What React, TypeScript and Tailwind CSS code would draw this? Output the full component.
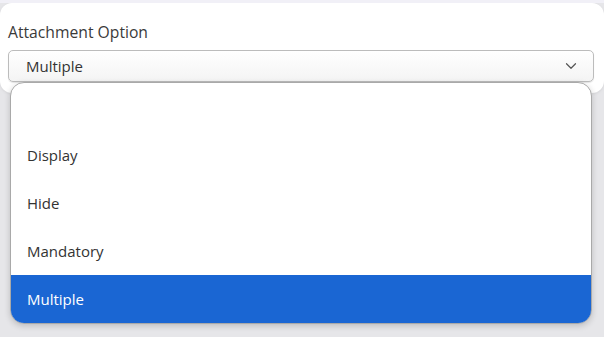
import { ChevronDown } from "lucide-react";

const options = ["", "Display", "Hide", "Mandatory", "Multiple"];

export default function App() {
  const selected = "Multiple";

  return (
    <div
      className="relative h-[337px] w-[604px] overflow-hidden bg-[#e6e6e9] pt-[3px]"
      style={{ fontFamily: "'Open Sans', Lato, sans-serif" }}
    >
      <div className="absolute left-0 right-0 top-0 h-[3px] bg-[#f1f0f7]" />
      <div className="h-[90px] rounded-[12px] bg-white pl-[8px] pr-[10px] pt-[20px] shadow-[0_1px_3px_rgba(0,0,0,0.08)]">
        <label className="block text-[15.7px] leading-[19px] text-[#3a3a3a]">Attachment Option</label>
        <div className="mt-[8px] flex h-[32px] items-center justify-between rounded-[5px] border border-[#bcbcbc] bg-gradient-to-b from-white to-[#f4f4f4] pl-[17px] pr-[13px] shadow-[0_1px_1px_rgba(0,0,0,0.1)]">
          <span className="text-[15px] text-[#333]">{selected}</span>
          <ChevronDown className="h-[18px] w-[18px] text-[#555]" strokeWidth={1.6} />
        </div>
      </div>

      <ul className="absolute left-[10px] top-[82px] w-[582px] overflow-hidden rounded-[14px] border border-[#a9a9a9] bg-white shadow-[0_2px_6px_rgba(0,0,0,0.18)]">
        {options.map((o, i) => (
          <li
            key={i}
            className={`flex h-[48px] items-center pl-[16px] text-[15px] leading-none ${
              o === selected ? "bg-[#1a66d3] text-white" : "text-[#333]"
            }`}
          >
            {o}
          </li>
        ))}
      </ul>
    </div>
  );
}
